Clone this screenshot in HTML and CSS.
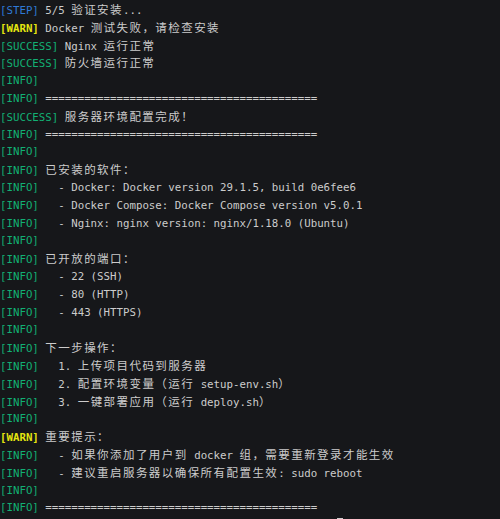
FILE: index.html
```html
<!DOCTYPE html>
<html lang="zh-CN">
<head>
<meta charset="utf-8">
<title>Terminal</title>
<link rel="stylesheet" href="styles.css">
</head>
<body>
<div class="term">
<div class="l"><span class="b">[STEP]</span> 5/5 <span class="c">验证安装</span>...</div>
<div class="l"><span class="y">[WARN]</span> Docker <span class="c">测试失败，请检查安装</span></div>
<div class="l"><span class="g">[SUCCESS]</span> Nginx <span class="c">运行正常</span></div>
<div class="l"><span class="g">[SUCCESS]</span> <span class="c">防火墙运行正常</span></div>
<div class="l"><span class="g">[INFO]</span></div>
<div class="l"><span class="g">[INFO]</span> ==========================================</div>
<div class="l"><span class="g">[SUCCESS]</span> <span class="c">服务器环境配置完成！</span></div>
<div class="l"><span class="g">[INFO]</span> ==========================================</div>
<div class="l"><span class="g">[INFO]</span></div>
<div class="l"><span class="g">[INFO]</span> <span class="c">已安装的软件：</span></div>
<div class="l"><span class="g">[INFO]</span>   - Docker: Docker version 29.1.5, build 0e6fee6</div>
<div class="l"><span class="g">[INFO]</span>   - Docker Compose: Docker Compose version v5.0.1</div>
<div class="l"><span class="g">[INFO]</span>   - Nginx: nginx version: nginx/1.18.0 (Ubuntu)</div>
<div class="l"><span class="g">[INFO]</span></div>
<div class="l"><span class="g">[INFO]</span> <span class="c">已开放的端口：</span></div>
<div class="l"><span class="g">[INFO]</span>   - 22 (SSH)</div>
<div class="l"><span class="g">[INFO]</span>   - 80 (HTTP)</div>
<div class="l"><span class="g">[INFO]</span>   - 443 (HTTPS)</div>
<div class="l"><span class="g">[INFO]</span></div>
<div class="l"><span class="g">[INFO]</span> <span class="c">下一步操作：</span></div>
<div class="l"><span class="g">[INFO]</span>   1. <span class="c">上传项目代码到服务器</span></div>
<div class="l"><span class="g">[INFO]</span>   2. <span class="c">配置环境变量（运行</span> setup-env.sh<span class="c">）</span></div>
<div class="l"><span class="g">[INFO]</span>   3. <span class="c">一键部署应用（运行</span> deploy.sh<span class="c">）</span></div>
<div class="l"><span class="g">[INFO]</span></div>
<div class="l"><span class="y">[WARN]</span> <span class="c">重要提示：</span></div>
<div class="l"><span class="g">[INFO]</span>   - <span class="c">如果你添加了用户到</span> docker <span class="c">组，需要重新登录才能生效</span></div>
<div class="l"><span class="g">[INFO]</span>   - <span class="c">建议重启服务器以确保所有配置生效</span>: sudo reboot</div>
<div class="l"><span class="g">[INFO]</span></div>
<div class="l"><span class="g">[INFO]</span> ==========================================</div>
<div class="l">                                                    <span class="cursor"> </span></div>
</div>
</body>
</html>
```
FILE: styles.css
```css
html, body {
  margin: 0;
  padding: 0;
  background: #16171a;
}
body {
  width: 500px;
  height: 519px;
  overflow: hidden;
}
.term {
  padding: 1px 0 0 0;
  font-family: "DejaVu Sans Mono", "Noto Sans CJK SC", monospace;
  font-size: 10.75px;
  color: #cccccc;
}
.l {
  height: 17.8px;
  line-height: 17.8px;
  white-space: pre;
  overflow: hidden;
}
.g { color: #12b074; }
.b { color: #2f7ad6; }
.y { color: #e5e510; font-weight: bold; }
.c {
  font-family: "Noto Sans CJK SC", sans-serif;
  font-size: 11.5px;
  letter-spacing: 1.44px;
  line-height: 17.8px;
}
.cursor {
  display: inline-block;
  width: 6.47px;
  height: 14px;
  background: #cccccc;
  vertical-align: top;
  margin-top: 1px;
}
```
